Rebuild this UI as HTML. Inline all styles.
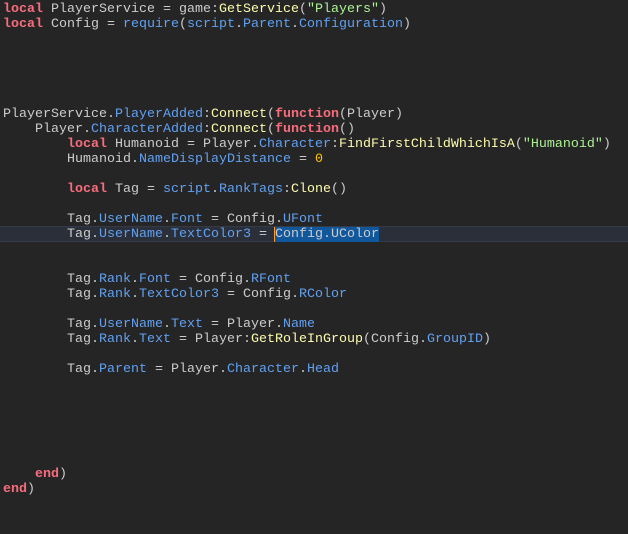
<!DOCTYPE html>
<html><head><style>
html,body{margin:0;padding:0;background:#252526;width:628px;height:534px;overflow:hidden}
pre{margin:0;padding:0 0 0 3px;font-family:"Liberation Mono",monospace;font-size:13.33px;line-height:15px;color:#cccccc;white-space:pre;position:relative;top:2px}
.k{color:#f86d7c;font-weight:bold}
.m{color:#fdfbac}
.p{color:#61a1f1}
.s{color:#adf195}
.n{color:#ffc600}
.cur{position:absolute;left:0;top:226px;width:628px;height:14px;background:#2b2f3a;border-top:1px solid #343a48;border-bottom:1px solid #343a48}
.sel{background:#11579c;box-shadow:-1px 0 0 #ff9a2e}
</style></head><body>
<div class="cur"></div>
<pre><span class="k">local</span> PlayerService = game:<span class="m">GetService</span>(<span class="s">"Players"</span>)
<span class="k">local</span> Config = <span class="p">require</span>(<span class="p">script</span>.<span class="p">Parent</span>.<span class="p">Configuration</span>)





PlayerService.<span class="p">PlayerAdded</span>:<span class="m">Connect</span>(<span class="k">function</span>(Player)
    Player.<span class="p">CharacterAdded</span>:<span class="m">Connect</span>(<span class="k">function</span>()
        <span class="k">local</span> Humanoid = Player.<span class="p">Character</span>:<span class="m">FindFirstChildWhichIsA</span>(<span class="s">"Humanoid"</span>)
        Humanoid.<span class="p">NameDisplayDistance</span> = <span class="n">0</span>

        <span class="k">local</span> Tag = <span class="p">script</span>.<span class="p">RankTags</span>:<span class="m">Clone</span>()

        Tag.<span class="p">UserName</span>.<span class="p">Font</span> = Config.<span class="p">UFont</span>
        Tag.<span class="p">UserName</span>.<span class="p">TextColor3</span> = <span class="sel">Config.UColor</span>


        Tag.<span class="p">Rank</span>.<span class="p">Font</span> = Config.<span class="p">RFont</span>
        Tag.<span class="p">Rank</span>.<span class="p">TextColor3</span> = Config.<span class="p">RColor</span>

        Tag.<span class="p">UserName</span>.<span class="p">Text</span> = Player.<span class="p">Name</span>
        Tag.<span class="p">Rank</span>.<span class="p">Text</span> = Player:<span class="m">GetRoleInGroup</span>(Config.<span class="p">GroupID</span>)

        Tag.<span class="p">Parent</span> = Player.<span class="p">Character</span>.<span class="p">Head</span>






    <span class="k">end</span>)
<span class="k">end</span>)
</pre>
</body></html>
